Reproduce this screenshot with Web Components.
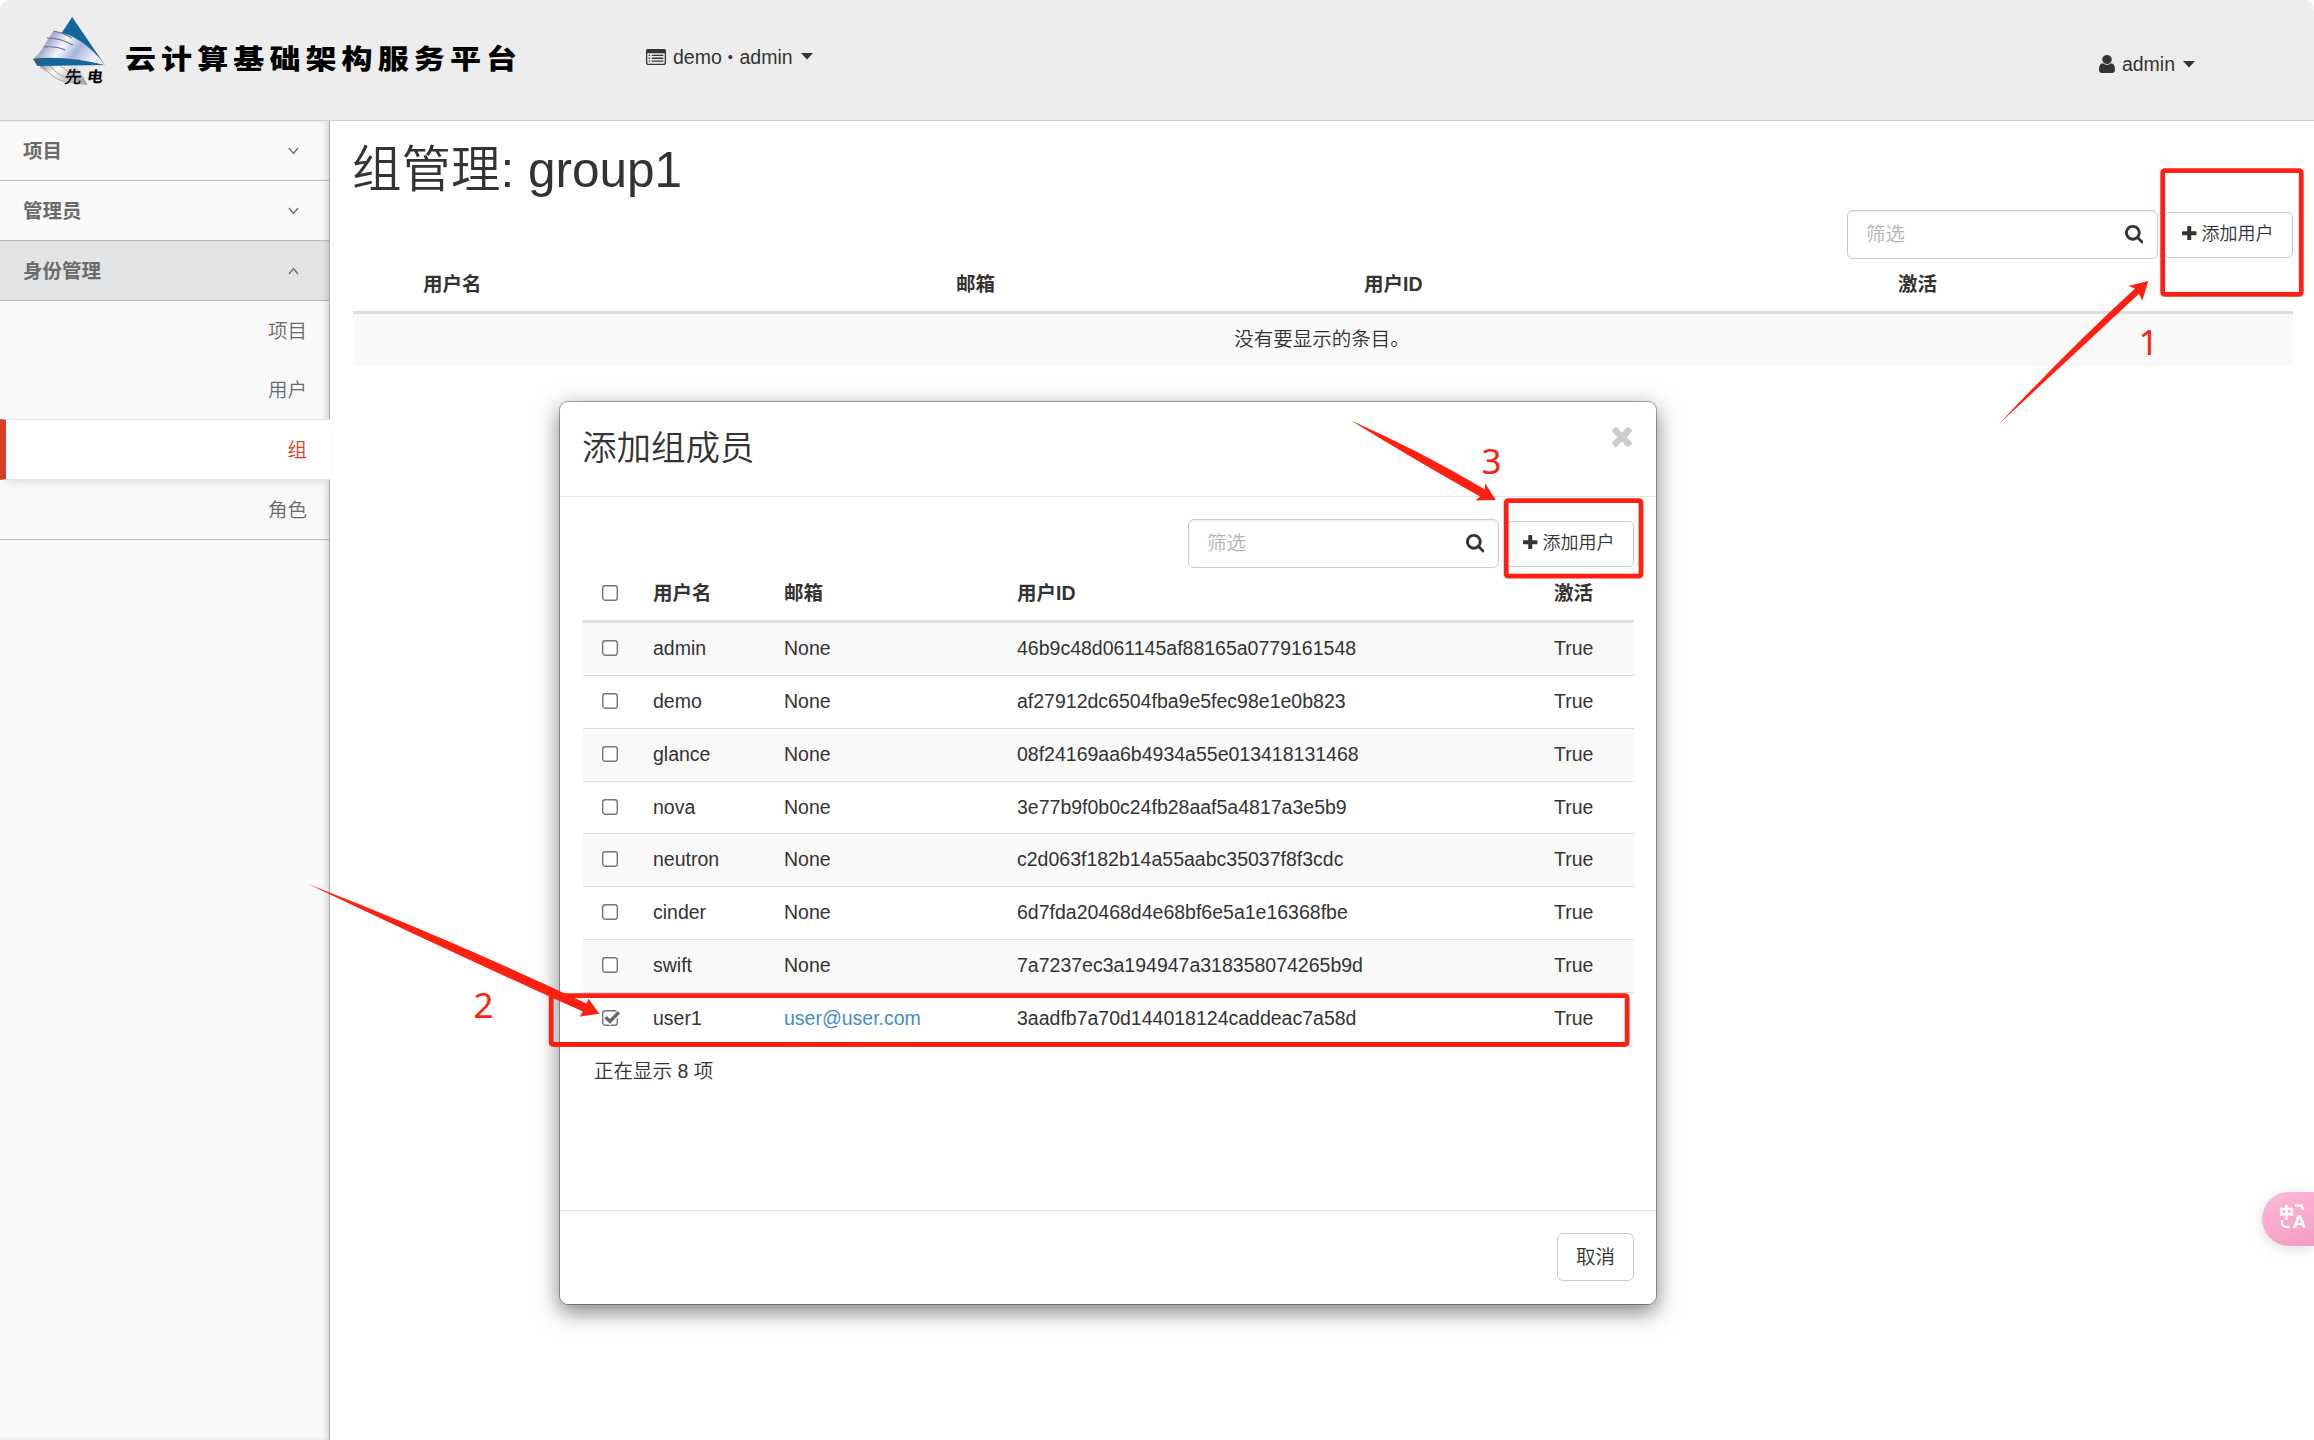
<!DOCTYPE html>
<html lang="zh-CN">
<head>
<meta charset="utf-8">
<title>组管理: group1</title>
<style>
html,body{margin:0;height:100%;overflow:hidden;background:#fff}
body{font:350 19.5px/28px "Liberation Sans","Noto Sans CJK SC",sans-serif;color:#333}
</style>
</head>
<body>
<cloud-app></cloud-app>
<script>
const define=(name,html)=>customElements.define(name,class extends HTMLElement{
  connectedCallback(){
    if(this.shadowRoot)return;
    const t=document.createElement('template');
    t.innerHTML=typeof html==='function'?html(this):html;
    this.attachShadow({mode:'open'}).append(t.content.cloneNode(true));
  }
});
const ICONS={
  search:['0 128 1664 1664','M1152 832q0-185-131.5-316.5t-316.5-131.5-316.5 131.5-131.5 316.5 131.5 316.5 316.5 131.5 316.5-131.5 131.5-316.5zm512 832q0 52-38 90t-90 38q-54 0-90-38l-343-342q-179 124-399 124-143 0-273.5-55.5t-225-150-150-225-55.5-273.5 55.5-273.5 150-225 225-150 273.5-55.5 273.5 55.5 225 150 150 225 55.5 273.5q0 220-124 399l343 343q37 37 37 90z'],
  plus:['192 128 1408 1408','M1600 736v192q0 40-28 68t-68 28h-416v416q0 40-28 68t-68 28h-192q-40 0-68-28t-28-68v-416h-416q-40 0-68-28t-28-68v-192q0-40 28-68t68-28h416v-416q0-40 28-68t68-28h192q40 0 68 28t28 68v416h416q40 0 68 28t28 68z'],
  times:['302 366 1188 1188','M1490 1322q0 40-28 68l-136 136q-28 28-68 28t-68-28l-294-294-294 294q-28 28-68 28t-68-28l-136-136q-28-28-28-68t28-68l294-294-294-294q-28-28-28-68t28-68l136-136q28-28 68-28t68 28l294 294 294-294q28-28 68-28t68 28l136 136q28 28 28 68t-28 68l-294 294 294 294q28 28 28 68z'],
  user:['256 128 1280 1536','M1536 1399q0 109-62.5 187t-150.5 78h-854q-88 0-150.5-78t-62.5-187q0-85 8.5-160.5t31.5-152 58.5-131 94-89 134.5-34.5q131 128 313 128t313-128q76 0 134.5 34.5t94 89 58.5 131 31.5 152 8.5 160.5zm-256-887q0 159-112.5 271.5t-271.5 112.5-271.5-112.5-112.5-271.5 112.5-271.5 271.5-112.5 271.5 112.5 112.5 271.5z'],
  list:['0 0 20 16','M1.8 0H18.2A1.8 1.8 0 0 1 20 1.8V14.2A1.8 1.8 0 0 1 18.2 16H1.8A1.8 1.8 0 0 1 0 14.2V1.8A1.8 1.8 0 0 1 1.8 0ZM1.3 4.2V14A.7.7 0 0 0 2 14.7H18A.7.7 0 0 0 18.7 14V4.2ZM2.7 5.7h1.4v1.3h-1.4zM5.8 5.7h11.5v1.3h-11.5zM2.7 8.6h1.4v1.3h-1.4zM5.8 8.6h11.5v1.3h-11.5zM2.7 11.5h1.4v1.3h-1.4zM5.8 11.5h11.5v1.3h-11.5z'],
  caret:['0 0 12 7','M0 0H12L6 6.6Z']
};
define('ui-icon',e=>{const[v,d]=ICONS[e.getAttribute('name')];const w=e.getAttribute('w'),h=e.getAttribute('h')||w;
  return `<style>:host{display:block;flex:none}svg{display:block}</style><svg width="${w}" height="${h}" viewBox="${v}" preserveAspectRatio="none"><path fill="currentColor" fill-rule="${e.getAttribute('name')==='list'?'evenodd':'nonzero'}" d="${d}"/></svg>`});

define('brand-logo',`<style>
:host{display:flex;align-items:flex-start;width:610px;padding:16px 0 0 32px;box-sizing:border-box}
svg{flex:none;display:block}
.name{font-family:"Noto Sans CJK SC",sans-serif;font-weight:900;font-size:31px;line-height:40px;letter-spacing:5.1px;color:#000;white-space:nowrap;margin:22px 0 0 18px;transform:scaleY(.88)}
</style>
<svg width="75" height="72" viewBox="0 0 70 72" preserveAspectRatio="none">
<defs>
<linearGradient id="w" x1="0" y1="0" x2="1" y2=".35"><stop offset="0" stop-color="#d8dcf0"/><stop offset=".28" stop-color="#9ea8d2"/><stop offset=".5" stop-color="#f6f7fc"/><stop offset=".72" stop-color="#aab4dc"/><stop offset="1" stop-color="#eef0fa"/></linearGradient>
<linearGradient id="g" x1="0" y1="0" x2="1" y2=".6"><stop offset="0" stop-color="#777"/><stop offset=".4" stop-color="#fafafa"/><stop offset="1" stop-color="#aaa"/></linearGradient>
</defs>
<path d="M5 47Q16 67 52 69L42 50Z" fill="url(#g)"/>
<path d="M9 49Q18 62 31 66M17 50Q22 58 36 64M26 50Q32 53 40 62" fill="none" stroke="#8a8a8a" stroke-width=".7"/>
<path d="M37.500 1L68 49L27 18Z" fill="#15669b"/>
<path d="M20 15Q47 19 68 49Q38 42 1 43Q7 38 11 30Q15 23 20 15Z" fill="url(#w)"/>
<path d="M14 22Q27 22 38 29M11 31Q22 30 31 34M20 15Q30 17 37 22" fill="none" stroke="#666e8c" stroke-width="1"/>
<path d="M1 43Q28 39 68 49L5 50Z" fill="#15669b"/>
<path d="M1 43L8 42L6 48Z" fill="#555"/>
<text x="29" y="67" font-family="Noto Sans CJK SC" font-size="17" font-weight="500" fill="#000" textLength="16" lengthAdjust="spacingAndGlyphs" transform="skewX(-8) translate(10 0)">先</text>
<text x="50" y="66.500" font-family="Noto Sans CJK SC" font-size="15" font-weight="700" fill="#000" transform="skewX(-8) translate(10 0)">电</text>
</svg><span class="name">云计算基础架构服务平台</span>`);

define('app-header',`<style>
:host{display:flex;height:120px;flex:none;background:#ededed;border-bottom:1px solid #ccc;border-radius:10px 10px 0 0}
.project,.user{display:flex;align-items:center;height:28px;white-space:nowrap}
.project{margin:43px 0 0 36px}.user{margin:50px 119px 0 auto}
.project ui-icon{margin-top:-1px}
.project span{margin:0 8px 0 7px}.user span{margin:0 8px 0 7px}
b{display:inline-block;font-weight:400;transform:scale(.75)}
</style>
<brand-logo></brand-logo>
<div class="project"><ui-icon name="list" w="20" h="16"></ui-icon><span>demo <b>•</b> admin</span><ui-icon name="caret" w="12" h="7"></ui-icon></div>
<div class="user"><ui-icon name="user" w="16" h="18"></ui-icon><span>admin</span><ui-icon name="caret" w="12" h="7"></ui-icon></div>`);

define('nav-group',e=>`<style>
:host{display:block}
.head{display:flex;justify-content:space-between;align-items:center;height:59px;padding:0 31px 0 23px;border-bottom:1px solid #b8b9ba;font-weight:700;color:#6a6a6a;${e.hasAttribute('open')?'background:#e2e4e6;':''}}
.body{${e.hasAttribute('open')?'border-bottom:1px solid #b8b9ba':'display:none'}}
svg{display:block}
</style><div class="head"><span>${e.getAttribute('label')}</span><svg width="12" height="8" viewBox="0 0 12 8"><path d="${e.hasAttribute('open')?'M2 7L6.500 1.500L11 7':'M2 1L6.500 6.500L11 1'}" fill="none" stroke="#6e6e6e" stroke-width="1.400"/></svg></div><div class="body"><slot></slot></div>`);

define('nav-item',e=>`<style>
:host{display:flex;align-items:center;justify-content:flex-end;height:59px;padding:0 23px 0 0;color:#6a6a6a;box-sizing:border-box}
:host([active]){height:61px;position:relative;background:#fff;color:#dd3d26;border-left:6px solid #dd3d26;border-top:1px solid #e3e3e3;border-bottom:1px solid #e3e3e3;box-shadow:0 6px 10px -6px rgba(0,0,0,.18)}
</style><slot></slot>`);

define('side-nav',`<style>
:host{display:block;width:330px;flex:none;background:#f9f9f9;box-sizing:border-box;position:relative}
:host::after{content:"";position:absolute;inset:0;pointer-events:none;box-shadow:inset -5px 0 6px -2px rgba(0,0,0,.16),inset -1px 0 0 #c6c6c6;clip-path:polygon(0 0,100% 0,100% 298px,0 298px,0 359px,100% 359px,100% 100%,0 100%)}
</style>
<nav-group label="项目"></nav-group><nav-group label="管理员"></nav-group>
<nav-group label="身份管理" open><nav-item>项目</nav-item><nav-item>用户</nav-item><nav-item active>组</nav-item><nav-item>角色</nav-item></nav-group>`);

define('table-actions',`<style>
:host{display:flex;justify-content:flex-end;align-items:center;gap:6px;height:49px}
.filter{display:flex;align-items:center;justify-content:space-between;box-sizing:border-box;width:311px;height:49px;padding:0 14px 0 18px;border:1px solid #ccc;border-radius:6px;box-shadow:inset 0 1.500px 1.500px rgba(0,0,0,.075);background:#fff}
.filter span{color:#b3b3b3;margin-top:-1px}
.add{display:flex;align-items:center;gap:5px;box-sizing:border-box;width:129px;height:46px;padding-left:17px;border:1px solid #ccc;border-radius:5px;font-size:18px;background:#fff;white-space:nowrap}
.add ui-icon{margin-top:-3px}
.add span{margin-top:-1px}
</style><div class="filter"><span>筛选</span><ui-icon name="search" w="18.500"></ui-icon></div><div class="add"><ui-icon name="plus" w="14.500"></ui-icon><span>添加用户</span></div>`);

define('check-box',e=>`<style>:host{display:block;height:18px}svg{display:block;overflow:visible}</style>
<svg width="20" height="18" viewBox="0 0 20 18"><rect x=".7" y="1.700" width="14.600" height="14.600" rx="2.600" fill="${e.hasAttribute('checked')?'none':'#fff'}" stroke="#767676" stroke-width="1.400"/>${e.hasAttribute('checked')?'<path d="M4 8.300L8 12.500L17 3.500" fill="none" stroke="#fff" stroke-width="5.500"/><path d="M3.700 8.200L8 12.400L17 3.200" fill="none" stroke="#666" stroke-width="3.400"/>':''}</svg>`);

const USERS=[['admin','None','46b9c48d061145af88165a0779161548'],['demo','None','af27912dc6504fba9e5fec98e1e0b823'],['glance','None','08f24169aa6b4934a55e013418131468'],['nova','None','3e77b9f0b0c24fb28aaf5a4817a3e5b9'],['neutron','None','c2d063f182b14a55aabc35037f8f3cdc'],['cinder','None','6d7fda20468d4e68bf6e5a1e16368fbe'],['swift','None','7a7237ec3a194947a318358074265b9d'],['user1','user@user.com','3aadfb7a70d144018124caddeac7a58d']];
define('user-table',()=>`<style>
:host{display:block}
.r{display:grid;grid-template-columns:70px 131px 233px 537px 1fr;align-items:center;box-sizing:border-box;height:52.860px;padding-bottom:2px;border-bottom:1px solid #ddd}
.r>check-box{margin-left:19px}
.h{height:55px;border-bottom:3px solid #ddd;font-weight:700;padding-bottom:3px}
.odd{background:#f9f9f9}
a{color:#428bca}
.foot{padding:11px 0 0 11px}
</style><div class="r h"><check-box></check-box><span>用户名</span><span>邮箱</span><span>用户ID</span><span>激活</span></div>${USERS.map((u,i)=>`<div class="r ${i%2?'':'odd'}"><check-box ${u[0]==='user1'?'checked':''}></check-box><span>${u[0]}</span>${u[1]==='None'?'<span>None</span>':`<a>${u[1]}</a>`}<span>${u[2]}</span><span>True</span></div>`).join('')}<div class="foot">正在显示 8 项</div>`);

define('group-page',`<style>
:host{display:block;flex:1;padding:0 21px 0 23px}
h1{font-weight:inherit;font-size:49.500px;line-height:56px;margin:21px 0 12px -1px}
.h{display:grid;grid-template-columns:70px 533px 408px 534px 1fr;font-weight:700;align-items:center;height:50px;padding-bottom:2px;border-bottom:3px solid #ddd}
.h span:nth-of-type(1){grid-column:2}
.empty{display:flex;justify-content:center;align-items:center;height:50px;padding:0 2px 2px 0;background:#f9f9f9}
</style><h1>组管理: group1</h1><table-actions></table-actions>
<div class="h"><span>用户名</span><span>邮箱</span><span>用户ID</span><span>激活</span></div><div class="empty">没有要显示的条目。</div>`);

define('member-dialog',`<style>
:host{position:absolute;left:559px;top:401px;width:1098px;height:904px;box-sizing:border-box;display:flex;flex-direction:column;background:#fff;border:1px solid rgba(0,0,0,.3);background-clip:padding-box;border-radius:9px;box-shadow:0 7px 22px rgba(0,0,0,.5)}
.head{display:flex;justify-content:space-between;height:94px;border-bottom:1px solid #e5e5e5;padding:0 24px 0 22px}
h3{font-weight:inherit;font-size:34.500px;line-height:46px;margin:23px 0 0}
.head ui-icon{margin-top:25px;color:#ccc}
.body{flex:1;padding:22px 22px 0 23px}
.foot{display:flex;justify-content:flex-end;align-items:flex-start;height:94px;border-top:1px solid #e5e5e5;padding-right:22px;box-sizing:border-box}
.cancel{margin-top:22px;width:77px;height:48px;box-sizing:border-box;border:1px solid #ccc;border-radius:6px;display:flex;align-items:center;justify-content:center;padding-bottom:1px}
</style><div class="head"><h3>添加组成员</h3><ui-icon name="times" w="20"></ui-icon></div>
<div class="body"><table-actions></table-actions><user-table></user-table></div>
<div class="foot"><div class="cancel">取消</div></div>`);

define('annotation-layer',`<style>:host{position:absolute;inset:0;pointer-events:none}svg{display:block}</style>
<svg width="2314" height="1440" viewBox="0 0 2314 1440">
<g fill="none" stroke="#ff2012" stroke-width="4.800"><rect x="2162.700" y="170.700" width="138.600" height="123.600" rx="2"/><rect x="551.200" y="995.700" width="1076" height="48.800" rx="2"/><rect x="1506.200" y="500.700" width="134.800" height="75.400" rx="2"/></g>
<g fill="#ff2012"><path d="M2148.300 281L2142.300 300.700L2139 293.700Q2070 358 1999 424Q2066 352 2135 288.500L2128.300 286Z"/><path d="M599.500 1013.700L580 1016.500L582.800 1011.500Q440 947 308 884Q450 939 586.500 1003.500L588.400 998.700Z"/><path d="M1495.800 500L1475.700 500.600L1480 496.500Q1413 459 1350.500 420.300Q1420 451 1485 489.500L1485 483Z"/></g>
<g fill="#ff2012" font-family="Noto Sans,Open Sans,sans-serif" font-size="35" font-weight="400" text-anchor="middle"><text x="2148.500" y="354.700">1</text><text x="483.500" y="1017.700">2</text><text x="1491.500" y="473.700">3</text></g>
</svg>`);

define('translate-pill',`<style>
:host{position:absolute;right:0;top:1192px;width:52px;height:54px;border-radius:27px 0 0 27px;background:linear-gradient(160deg,#fdb9d5,#f49cc4);box-shadow:0 3px 14px rgba(0,0,0,.13)}
svg{display:block}
</style><svg width="52" height="54" viewBox="0 0 52 54"><g fill="#fff"><text x="17" y="26" font-family="Noto Sans CJK SC" font-weight="900" font-size="15">中</text><text x="30.500" y="36" font-family="Liberation Sans" font-weight="700" font-size="19">A</text></g><path d="M33 13.500H37Q41 13.500 41 18M20 28V30Q20 35 25 35H28" fill="none" stroke="#fff" stroke-width="2.300"/></svg>`);

define('cloud-app',`<style>
:host{display:flex;flex-direction:column;width:2314px;height:1440px;position:relative;overflow:hidden;background:#fff}
.main{display:flex;flex:1}
</style><app-header></app-header><div class="main"><side-nav></side-nav><group-page></group-page></div><member-dialog></member-dialog><translate-pill></translate-pill><annotation-layer></annotation-layer>`);
</script>
</body>
</html>
